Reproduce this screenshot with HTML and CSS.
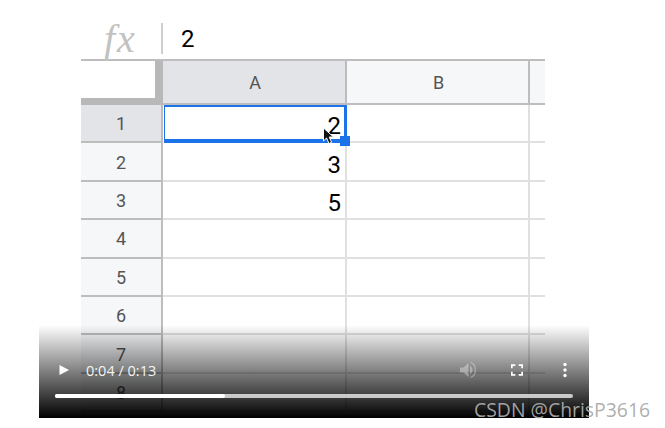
FILE: index.html
```html
<!DOCTYPE html>
<html lang="en">
<head>
    <meta charset="UTF-8">
    <title>Sheet video</title>
    <link rel="stylesheet" href="styles.css">
</head>
<body>
    <div class="sheet-wrap">
        <div class="formula-bar">
            <span class="fx">fx</span>
            <span class="formula-value">2</span>
        </div>
        <div class="grid">
            <div class="corner"></div>
            <div class="col-head active">A</div>
            <div class="col-head">B</div>
            <div class="col-head last"></div>

            <div class="row-head active">1</div>
            <div class="cell selected">2
                <svg class="pointer" width="14" height="18" viewBox="0 0 14 18">
                    <path d="M1.5 1 V14 L4.6 11 L7 16.5 L9.6 15.3 L7.2 10 H11.5 Z" fill="#111" stroke="#fff" stroke-width="1"/>
                </svg>
                <span class="handle"></span>
            </div>
            <div class="cell"></div>
            <div class="cell last"></div>

            <div class="row-head">2</div>
            <div class="cell">3</div>
            <div class="cell"></div>
            <div class="cell last"></div>

            <div class="row-head">3</div>
            <div class="cell">5</div>
            <div class="cell"></div>
            <div class="cell last"></div>

            <div class="row-head">4</div>
            <div class="cell"></div>
            <div class="cell"></div>
            <div class="cell last"></div>

            <div class="row-head">5</div>
            <div class="cell"></div>
            <div class="cell"></div>
            <div class="cell last"></div>

            <div class="row-head">6</div>
            <div class="cell"></div>
            <div class="cell"></div>
            <div class="cell last"></div>

            <div class="row-head">7</div>
            <div class="cell"></div>
            <div class="cell"></div>
            <div class="cell last"></div>

            <div class="row-head">8</div>
            <div class="cell"></div>
            <div class="cell"></div>
            <div class="cell last"></div>
        </div>
    </div>

    <div class="video-controls">
        <div class="controls-row">
            <svg class="play" width="12" height="12" viewBox="0 0 12 12"><path d="M1.5 1 L11 6 L1.5 11 Z" fill="#fff"/></svg>
            <span class="time">0:04 / 0:13</span>
            <span class="spacer"></span>
            <svg class="volume" width="18" height="18" viewBox="0 0 18 18">
                <path d="M1 6.5 H4.5 L9.5 2 V16 L4.5 11.5 H1 Z" fill="#fff"/>
                <path d="M11 5 C14.5 6.5 14.5 11.5 11 13 Z" fill="#fff"/>
                <path d="M11.5 1.5 C18 3.5 18 14.5 11.5 16.5" fill="none" stroke="#fff" stroke-width="1.2"/>
            </svg>
            <svg class="fullscreen" width="12" height="12" viewBox="0 0 14 14">
                <path d="M1 5 V1.2 H5 M9 1.2 H13 V5 M13 9 V12.8 H9 M5 12.8 H1 V9" fill="none" stroke="#fff" stroke-width="2"/>
            </svg>
            <svg class="more" width="6" height="16" viewBox="0 0 6 16">
                <circle cx="3" cy="2.5" r="1.7" fill="#fff"/>
                <circle cx="3" cy="8" r="1.7" fill="#fff"/>
                <circle cx="3" cy="13.5" r="1.7" fill="#fff"/>
            </svg>
        </div>
        <div class="progress"><div class="progress-played"></div></div>
    </div>

    <div class="watermark">CSDN @ChrisP3616</div>
</body>
</html>
```

FILE: styles.css
```css
body {
    margin: 0;
    background-color: white;
    font-family: "Roboto", "Liberation Sans", sans-serif;
    width: 665px;
    height: 428px;
    overflow: hidden;
    position: relative;
}

.sheet-wrap {
    margin-left: 81px;
    width: 464px;
    height: 418px;
    overflow: hidden;
}

.formula-bar {
    height: 59px;
    display: flex;
    align-items: center;
    padding-top: 18px;
    box-sizing: border-box;
}

.fx {
    width: 82px;
    box-sizing: border-box;
    padding-left: 23px;
    height: 31px;
    line-height: 31px;
    font-family: "Liberation Serif", serif;
    font-style: italic;
    font-size: 40px;
    letter-spacing: 2px;
    color: #c2c2c2;
    border-right: 2px solid #cfcfcf;
    flex-shrink: 0;
}

.formula-value {
    margin-left: 18px;
    font-size: 24px;
    color: #000;
}

.grid {
    display: grid;
    grid-template-columns: 82px 184px 183px 15px;
    grid-template-rows: 46px repeat(8, 38.4px);
    border-top: 2px solid #bdbdbd;
}

.corner {
    background-color: white;
    border-right: 8px solid #b8b8b8;
    border-bottom: 7px solid #b8b8b8;
    box-sizing: border-box;
    height: 44px;
}

.col-head {
    background-color: #f6f7f9;
    border-right: 2px solid #bdbdbd;
    border-bottom: 2px solid #bdbdbd;
    height: 44px;
    box-sizing: border-box;
    display: flex;
    align-items: center;
    justify-content: center;
    padding-left: 2px;
    font-size: 18px;
    color: #555;
}

.col-head.active {
    background-color: #e3e4e8;
}

.col-head.last {
    border-right: none;
}

.row-head {
    background-color: #f6f7f9;
    border-right: 2px solid #bdbdbd;
    border-bottom: 2px solid #bdbdbd;
    box-sizing: border-box;
    display: flex;
    align-items: center;
    justify-content: center;
    padding-top: 1px;
    font-size: 18px;
    color: #555;
    margin-top: -2px;
    height: 38.4px;
}

.row-head.active {
    background-color: #e3e4e8;
}

.cell {
    border-right: 2px solid #e0e0e0;
    border-bottom: 2px solid #e0e0e0;
    box-sizing: border-box;
    display: flex;
    align-items: center;
    justify-content: flex-end;
    padding: 7px 4px 0 0;
    font-size: 24px;
    color: #000;
    margin-top: -2px;
    height: 38.4px;
    position: relative;
}

.cell.last {
    border-right: none;
}

.cell.selected {
    border: 1px solid #1a73e8;
    border-top-width: 2px;
    border-right-width: 3px;
    border-bottom-width: 4px;
    margin-left: 1px;
    padding: 6px 3px 0 0;
    background-color: white;
    z-index: 1;
}

.pointer {
    position: absolute;
    left: 157px;
    top: 20px;
}

.handle {
    position: absolute;
    right: -6px;
    bottom: -7px;
    width: 10px;
    height: 10px;
    background-color: #1a73e8;
}

.video-controls {
    position: absolute;
    left: 39px;
    top: 325px;
    width: 550px;
    height: 93px;
    background: linear-gradient(to bottom, rgba(0,0,0,0) 0%, rgba(0,0,0,0.3) 30%, rgba(0,0,0,0.62) 62%, rgba(0,0,0,1) 100%);
    display: flex;
    flex-direction: column;
    box-sizing: border-box;
    padding: 34px 16px 0;
    z-index: 2;
}

.controls-row {
    display: flex;
    align-items: center;
    height: 22px;
    color: white;
}

.play {
    margin-left: 3px;
}

.time {
    font-family: "Open Sans", sans-serif;
    font-size: 14.5px;
    margin-left: 16px;
    opacity: 0.92;
}

.spacer {
    flex: 1;
}

.volume {
    opacity: 0.35;
    margin-right: 34px;
}

.fullscreen {
    margin-right: 39px;
}

.more {
    margin-right: 5px;
}

.progress {
    margin-top: 13px;
    height: 4px;
    background-color: rgba(255,255,255,0.72);
    border-radius: 2px;
}

.progress-played {
    width: 170px;
    height: 4px;
    background-color: white;
    border-radius: 2px;
}

.watermark {
    position: absolute;
    left: 474px;
    top: 396px;
    font-family: "Open Sans", sans-serif;
    font-size: 19.4px;
    color: rgba(170,170,170,0.95);
    z-index: 3;
}
```
